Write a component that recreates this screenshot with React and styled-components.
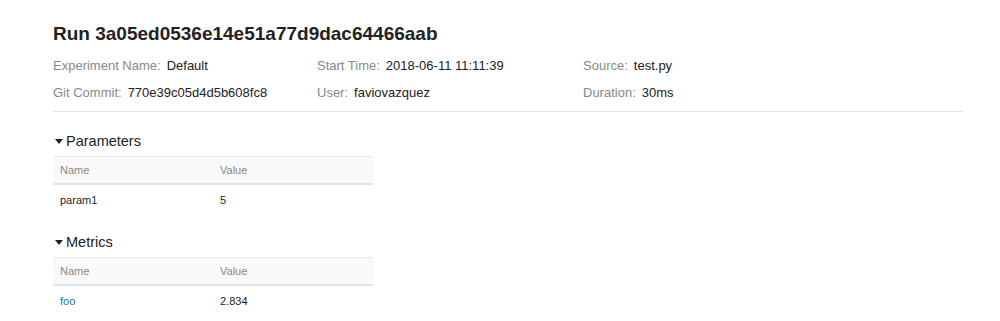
import React from 'react';
import styled, { createGlobalStyle } from 'styled-components';

const GlobalStyle = createGlobalStyle`
  body {
    margin: 0;
    background: #fff;
    font-family: "Liberation Sans", Arial, Helvetica, sans-serif;
    color: #222;
  }
`;

const Page = styled.div`
  padding: 22px 37px 0 53px;
`;

const Title = styled.h1`
  margin: 0;
  font-size: 19px;
  line-height: 24px;
  font-weight: bold;
  color: #222;
`;

const MetaGrid = styled.div`
  display: grid;
  grid-template-columns: 264px 266px 1fr;
  grid-auto-rows: 27px;
  margin-top: 6px;
  font-size: 13px;
  line-height: 27px;
`;

const MetaItem = styled.div`
  white-space: nowrap;
`;

const Label = styled.span`
  color: #888;
  margin-right: 6px;
`;

const Value = styled.span`
  color: #222;
`;

const Divider = styled.hr`
  margin: 5px 0 19px;
  border: 0;
  border-top: 1px solid #e2e2e2;
`;

const Sections = styled.div`
  display: flex;
  flex-direction: column;
  gap: 17px;
`;

const SectionHeading = styled.div`
  display: flex;
  align-items: center;
  gap: 3px;
  margin: 0 0 5px 2px;
  font-size: 14.5px;
  line-height: 20px;
  color: #222;
`;

const Caret = styled.span`
  display: inline-block;
  width: 0;
  height: 0;
  border-left: 4px solid transparent;
  border-right: 4px solid transparent;
  border-top: 5px solid #222;
`;

const Table = styled.table`
  width: 320px;
  border-collapse: collapse;
  table-layout: fixed;
  font-size: 11px;
`;

const HeadCell = styled.th`
  height: 26px;
  padding: 0 7px;
  text-align: left;
  font-weight: normal;
  color: #888;
  background: #f9f9f9;
  border-top: 1px solid #e8e8e8;
  border-bottom: 2px solid #e4e4e4;
`;

const Cell = styled.td`
  height: 30px;
  padding: 0 7px;
  color: #222;
`;

const Link = styled.a`
  color: #1a6fc0;
  text-decoration: none;
`;

const META = [
  ['Experiment Name:', 'Default'],
  ['Start Time:', '2018-06-11 11:11:39'],
  ['Source:', 'test.py'],
  ['Git Commit:', '770e39c05d4d5b608fc8'],
  ['User:', 'faviovazquez'],
  ['Duration:', '30ms'],
];

const SECTIONS = [
  { title: 'Parameters', rows: [{ name: 'param1', value: '5' }] },
  { title: 'Metrics', rows: [{ name: 'foo', value: '2.834', link: true }] },
];

function KeyValueTable({ rows }) {
  return (
    <Table>
      <thead>
        <tr>
          <HeadCell>Name</HeadCell>
          <HeadCell>Value</HeadCell>
        </tr>
      </thead>
      <tbody>
        {rows.map((row) => (
          <tr key={row.name}>
            <Cell>{row.link ? <Link href="#">{row.name}</Link> : row.name}</Cell>
            <Cell>{row.value}</Cell>
          </tr>
        ))}
      </tbody>
    </Table>
  );
}

export default function App() {
  return (
    <>
      <GlobalStyle />
      <Page>
        <Title>Run 3a05ed0536e14e51a77d9dac64466aab</Title>
        <MetaGrid>
          {META.map(([label, value]) => (
            <MetaItem key={label}>
              <Label>{label}</Label>
              <Value>{value}</Value>
            </MetaItem>
          ))}
        </MetaGrid>
        <Divider />
        <Sections>
          {SECTIONS.map((section) => (
            <div key={section.title}>
              <SectionHeading>
                <Caret />
                {section.title}
              </SectionHeading>
              <KeyValueTable rows={section.rows} />
            </div>
          ))}
        </Sections>
      </Page>
    </>
  );
}
